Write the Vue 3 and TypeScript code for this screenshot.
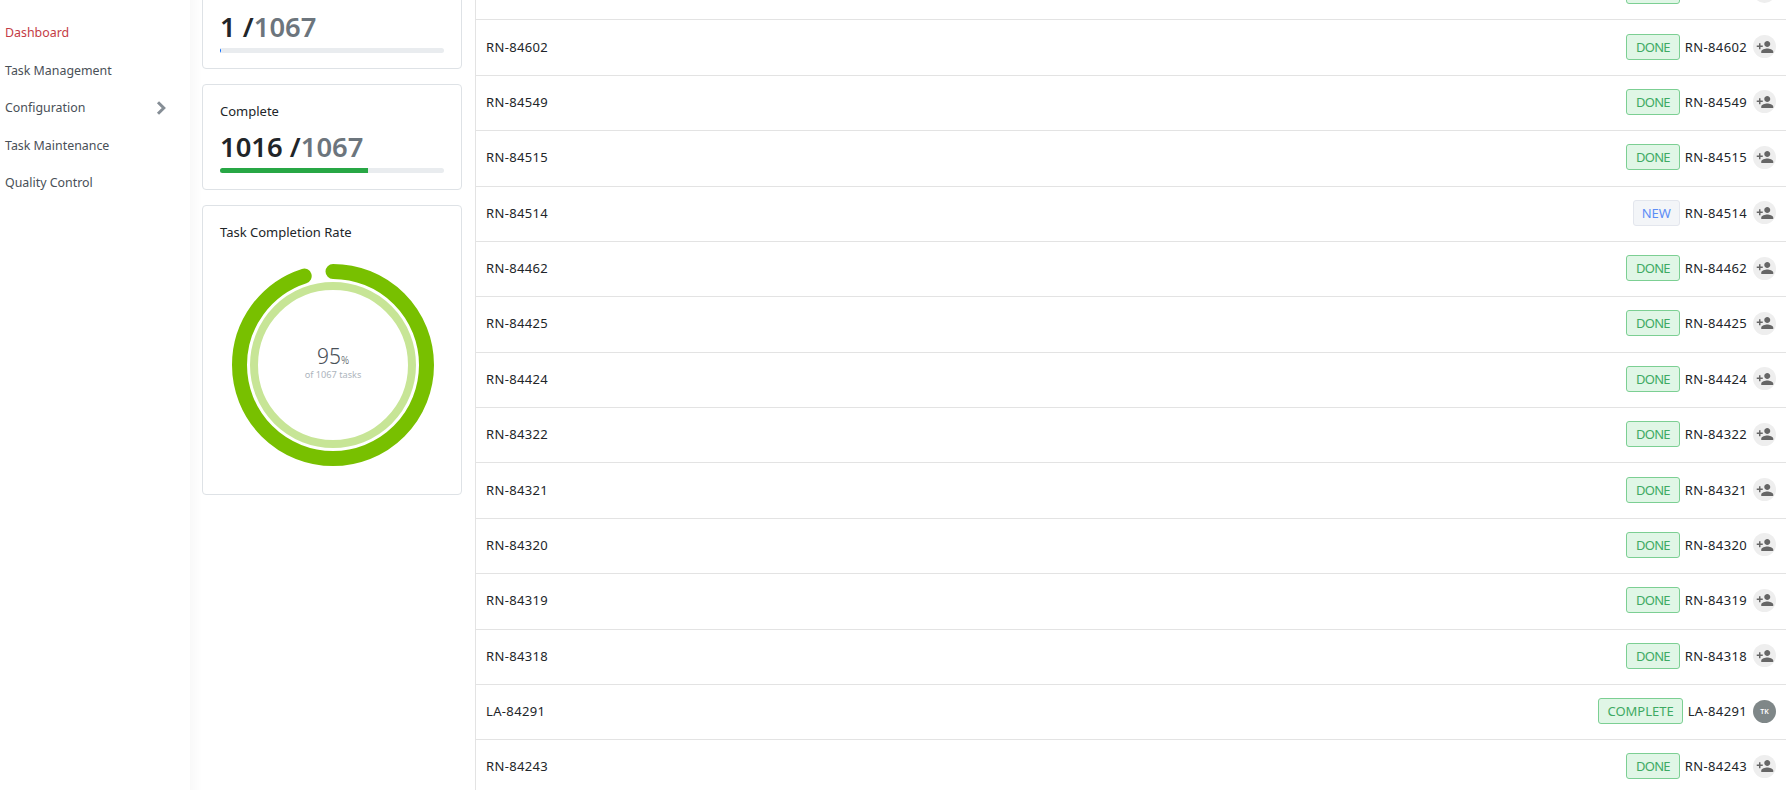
<script setup lang="ts">
interface TaskRow {
  id: string
  status: 'DONE' | 'NEW' | 'COMPLETE'
  assignee?: string
}

const menu = ['Dashboard', 'Task Management', 'Configuration', 'Task Maintenance', 'Quality Control']

const rows: TaskRow[] = [
  { id: 'RN-84603', status: 'DONE' },
  { id: 'RN-84602', status: 'DONE' },
  { id: 'RN-84549', status: 'DONE' },
  { id: 'RN-84515', status: 'DONE' },
  { id: 'RN-84514', status: 'NEW' },
  { id: 'RN-84462', status: 'DONE' },
  { id: 'RN-84425', status: 'DONE' },
  { id: 'RN-84424', status: 'DONE' },
  { id: 'RN-84322', status: 'DONE' },
  { id: 'RN-84321', status: 'DONE' },
  { id: 'RN-84320', status: 'DONE' },
  { id: 'RN-84319', status: 'DONE' },
  { id: 'RN-84318', status: 'DONE' },
  { id: 'LA-84291', status: 'COMPLETE', assignee: 'TK' },
  { id: 'RN-84243', status: 'DONE' },
]
</script>

<template>
  <div class="page">
    <nav class="sidebar">
      <a
        v-for="(item, i) in menu"
        :key="item"
        class="menu-item"
        :class="{ active: i === 0 }"
      >
        {{ item }}
        <svg v-if="item === 'Configuration'" class="chevron" viewBox="0 0 10 14" width="10" height="14">
          <path d="M2 1.2 7.8 7 2 12.8" fill="none" stroke="#868e96" stroke-width="3" />
        </svg>
      </a>
    </nav>

    <section class="stats">
      <div class="card card-top">
        <div class="count"><b>1</b> <b>/</b><span>1067</span></div>
        <div class="bar"><div class="fill blue" style="width: 1px"></div></div>
      </div>

      <div class="card card-complete">
        <div class="label">Complete</div>
        <div class="count"><b>1016</b> <b>/</b><span>1067</span></div>
        <div class="bar"><div class="fill green" style="width: 66%"></div></div>
      </div>

      <div class="card card-rate">
        <div class="label">Task Completion Rate</div>
        <div class="ring">
          <svg viewBox="0 0 202 202" width="202" height="202">
            <circle cx="101" cy="101" r="79" fill="none" stroke="#c7e596" stroke-width="8" />
            <circle
              cx="101"
              cy="101"
              r="93.5"
              fill="none"
              stroke="#78c000"
              stroke-width="15"
              stroke-linecap="round"
              pathLength="100"
              stroke-dasharray="95 100"
              transform="rotate(-90 101 101)"
            />
          </svg>
          <div class="ring-text">
            <div class="pct">95<small>%</small></div>
            <div class="of">of 1067 tasks</div>
          </div>
        </div>
      </div>
    </section>

    <section class="list">
      <div v-for="row in rows" :key="row.id" class="row">
        <span class="row-id">{{ row.id }}</span>
        <span class="badge" :class="row.status.toLowerCase()">{{ row.status }}</span>
        <span class="row-ref">{{ row.id }}</span>
        <span v-if="row.assignee" class="avatar initials">{{ row.assignee }}</span>
        <span v-else class="avatar">
          <svg viewBox="0 0 24 24" width="18" height="18">
            <path
              fill="#666"
              d="M15 12c2.21 0 4-1.79 4-4s-1.79-4-4-4-4 1.79-4 4 1.79 4 4 4zm-9-2V7H4v3H1v2h3v3h2v-3h3v-2H6zm9 4c-2.67 0-8 1.34-8 4v2h16v-2c0-2.66-5.33-4-8-4z"
            />
          </svg>
        </span>
      </div>
    </section>
  </div>
</template>

<style>
html,
body {
  margin: 0;
  background: #fff;
  overflow: hidden;
}
</style>

<style scoped>
.page {
  display: flex;
  height: 790px;
  overflow: hidden;
  font-family: 'Noto Sans', 'Liberation Sans', sans-serif;
  font-size: 13px;
  color: #212529;
}

.sidebar {
  width: 190px;
  flex: none;
  padding-top: 14px;
  box-sizing: border-box;
  font-size: 12.4px;
}

.menu-item {
  display: flex;
  align-items: center;
  justify-content: space-between;
  height: 37.5px;
  padding: 0 24px 0 5px;
  color: #495057;
}

.menu-item.active {
  color: #c43b45;
}

.stats {
  width: 285px;
  flex: none;
  box-sizing: border-box;
  padding: 0 13px 0 12px;
  background: linear-gradient(90deg, #f9f9f9, #fff 12px);
  display: flex;
  flex-direction: column;
  gap: 15px;
}

.card {
  border: 1px solid #dee2e6;
  border-radius: 4px;
  padding: 16px 17px 0;
  height: 105px;
  box-sizing: border-box;
  background: #fff;
}

.card-top {
  margin-top: -36px;
}

.card-complete {
  height: 106px;
}

.card-rate {
  height: 290px;
}

.label {
  line-height: 20px;
}

.count {
  margin-top: 8px;
  font-size: 27.4px;
  line-height: 36px;
  white-space: pre;
}

.card-top .count {
  margin-top: 28px;
}

.count b {
  font-weight: 600;
}

.count span {
  font-weight: 600;
  color: #6c757d;
}

.bar {
  margin-top: 3px;
  height: 5px;
  border-radius: 3px;
  background: #e9ecef;
  overflow: hidden;
}

.fill {
  height: 100%;
}

.fill.blue {
  background: #0d6efd;
}

.fill.green {
  background: #28a745;
}

.ring {
  position: relative;
  width: 202px;
  height: 202px;
  margin: 22px 0 0 12px;
}

.ring svg {
  display: block;
}

.ring-text {
  position: absolute;
  inset: 0;
  padding-bottom: 6px;
  box-sizing: border-box;
  display: flex;
  flex-direction: column;
  align-items: center;
  justify-content: center;
  text-align: center;
  color: #495057;
}

.pct {
  font-size: 21px;
  line-height: 20px;
  font-weight: 300;
}

.pct small {
  font-size: 10px;
}

.of {
  font-size: 9.2px;
  line-height: 9px;
  color: #adb5bd;
}

.list {
  flex: 1;
  min-width: 0;
  border-left: 1px solid #e3e3e3;
  margin-top: -35px;
}

.row {
  display: flex;
  align-items: center;
  height: 55.38px;
  box-sizing: border-box;
  padding: 0 10px 2px;
  border-bottom: 1px solid #e3e3e3;
  letter-spacing: 0.35px;
}

.row-id {
  flex: 1;
}

.badge {
  box-sizing: border-box;
  height: 26px;
  line-height: 24px;
  padding: 0 8px;
  border: 1px solid #7ccf93;
  border-radius: 3px;
  background: #e0f6e6;
  color: #3eaa63;
  letter-spacing: 0;
}

.badge.done {
  padding: 0 9px;
  letter-spacing: -0.7px;
}

.badge.new {
  border-color: #e3e6ed;
  background: #f3f5f8;
  color: #5c8df6;
}

.row-ref {
  margin: 0 5px;
}

.avatar {
  margin-left: 1px;
  width: 23px;
  height: 23px;
  border-radius: 50%;
  background: #eee;
  display: flex;
  align-items: center;
  justify-content: center;
}

.avatar.initials {
  background: #7f8788;
  color: #fff;
  font-size: 7px;
  font-weight: 600;
  letter-spacing: 0;
}
</style>
